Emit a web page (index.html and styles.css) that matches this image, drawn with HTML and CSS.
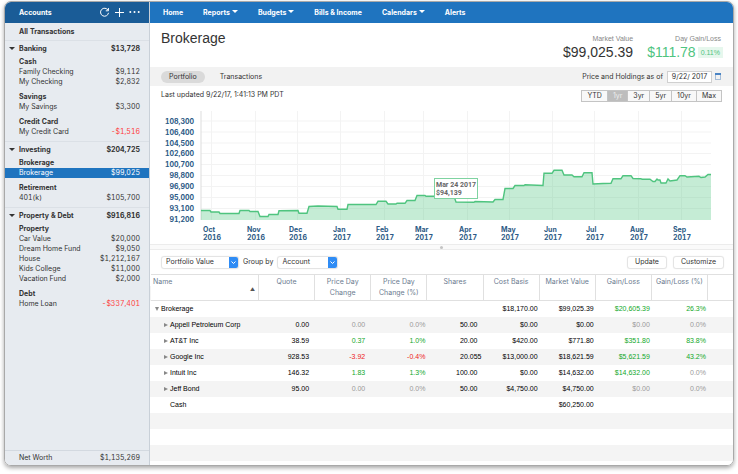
FILE: index.html
```html
<!DOCTYPE html>
<html lang="en">
<head>
    <meta charset="UTF-8">
    <meta name="viewport" content="width=device-width, initial-scale=1.0">
    <title>Brokerage</title>
    <link rel="stylesheet" href="styles.css">
</head>
<body>
    <div class="window">
        <aside class="sidebar">
            <div class="sidebar-top">
                <h2>Accounts</h2>
                <button class="icon-button" aria-label="Refresh"><svg width="11" height="11" viewBox="0 0 11 11"><path d="M9 3.2A4 4 0 1 0 9.5 5.8M9.4 1v2.8H6.8" /></svg></button>
                <button class="icon-button" aria-label="Add"><svg width="11" height="11" viewBox="0 0 11 11"><path d="M5.5 1v9M1 5.5h9" /></svg></button>
                <button class="icon-button" aria-label="More"><svg class="dots" width="11" height="11" viewBox="0 0 11 11"><circle cx="1.3" cy="5" r="1" /><circle cx="5.5" cy="5" r="1" /><circle cx="9.7" cy="5" r="1" /></svg></button>
            </div>
            <a href="#" class="all">All Transactions</a>
            <section>
                <h3><span>Banking</span><span>$13,728</span></h3>
                <div class="group">
                    <h4>Cash</h4>
                    <a href="#" class="account"><span>Family Checking</span><span>$9,112</span></a>
                    <a href="#" class="account"><span>My Checking</span><span>$2,832</span></a>
                </div>
                <div class="group">
                    <h4>Savings</h4>
                    <a href="#" class="account"><span>My Savings</span><span>$3,300</span></a>
                </div>
                <div class="group">
                    <h4>Credit Card</h4>
                    <a href="#" class="account"><span>My Credit Card</span><span class="debt">-$1,516</span></a>
                </div>
            </section>
            <section>
                <h3><span>Investing</span><span>$204,725</span></h3>
                <div class="group">
                    <h4>Brokerage</h4>
                    <a href="#" class="account selected"><span>Brokerage</span><span>$99,025</span></a>
                </div>
                <div class="group">
                    <h4>Retirement</h4>
                    <a href="#" class="account"><span>401(k)</span><span>$105,700</span></a>
                </div>
            </section>
            <section>
                <h3><span>Property &amp; Debt</span><span>$916,816</span></h3>
                <div class="group">
                    <h4>Property</h4>
                    <a href="#" class="account"><span>Car Value</span><span>$20,000</span></a>
                    <a href="#" class="account"><span>Dream Home Fund</span><span>$9,050</span></a>
                    <a href="#" class="account"><span>House</span><span>$1,212,167</span></a>
                    <a href="#" class="account"><span>Kids College</span><span>$11,000</span></a>
                    <a href="#" class="account"><span>Vacation Fund</span><span>$2,000</span></a>
                </div>
                <div class="group">
                    <h4>Debt</h4>
                    <a href="#" class="account"><span>Home Loan</span><span class="debt">-$337,401</span></a>
                </div>
            </section>
            <div class="net-worth"><span>Net Worth</span><span>$1,135,269</span></div>
        </aside>

        <main>
            <nav>
                <a href="#">Home</a>
                <a href="#" class="menu">Reports</a>
                <a href="#" class="menu">Budgets</a>
                <a href="#">Bills &amp; Income</a>
                <a href="#" class="menu">Calendars</a>
                <a href="#">Alerts</a>
            </nav>
            <header>
                <h1>Brokerage</h1>
                <div class="stat">
                    <div class="label">Market Value</div>
                    <div class="value">$99,025.39</div>
                </div>
                <div class="stat gain">
                    <div class="label">Day Gain/Loss</div>
                    <div class="value">$111.78<span class="badge">0.11%</span></div>
                </div>
            </header>
            <div class="tabs">
                <button class="tab active">Portfolio</button>
                <button class="tab">Transactions</button>
                <label for="asOf">Price and Holdings as of</label>
                <input type="text" id="asOf" value="9/22/ 2017">
                <button class="icon-button" aria-label="Calendar"><svg class="calendar" width="6" height="7" viewBox="0 0 6 7"><rect x="0.5" y="0.5" width="5" height="6" /><path d="M0 1h6" /></svg></button>
            </div>
            <div class="chart-bar">
                <p>Last updated 9/22/17, 1:41:13 PM PDT</p>
                <div class="ranges">
                    <button>YTD</button>
                    <button class="active">1yr</button>
                    <button>3yr</button>
                    <button>5yr</button>
                    <button>10yr</button>
                    <button>Max</button>
                </div>
            </div>
            <svg class="chart" viewBox="150 104 583 140">
                <path class="grid" d="M201 121h510M201 132h510M201 143h510M201 153.500h510M201 164.500h510M201 175.500h510M201 186.500h510M201 197.500h510M201 208.500h510" />
                <path class="grid" d="M211.500 111v109M255.500 111v109M297.500 111v109M340.500 111v109M384.500 111v109M423.500 111v109M467.500 111v109M509.500 111v109M552.500 111v109M594.500 111v109M638.500 111v109M681.500 111v109" />
                <path class="axis" d="M201 111v109" />
                <path class="area" d="M201 210.500H210L211 212H219L220 213.500H239L240 210.500H249L250 211.500H258L260 216.500H268L269 214.500H278L279 210.800L298 210.500L299 213.300H307L309 206.500L318 206L337 206.500L338 209.300H347L348 204.500H376L378 201.300H386L388 204H396L397 203.300H405L407 200.500H415L417 195.500H425L426 196.300H454L456 202L474 202.300L475 201.500L493 202L495 199.500H503L505 188.500H513L515 185.500H524L525 184.800L543 185.500L544 173.300H552L554 170.300H562L564 175H572L574 176.700H582L584 172.700H592L593 184L603 183.500L611 183.300L613 178.700H621L623 175.700H631L633 178.500L641 178.700L642 179.300H650L653 181.500H655L657 179L658 180H660L661 183H666L668 179L670 181L677 180L680 175.700H685L687 177L699 176.300L701 177.500L705 177L708 174.500H711V220H201Z" />
                <path class="line" d="M201 210.500H210L211 212H219L220 213.500H239L240 210.500H249L250 211.500H258L260 216.500H268L269 214.500H278L279 210.800L298 210.500L299 213.300H307L309 206.500L318 206L337 206.500L338 209.300H347L348 204.500H376L378 201.300H386L388 204H396L397 203.300H405L407 200.500H415L417 195.500H425L426 196.300H454L456 202L474 202.300L475 201.500L493 202L495 199.500H503L505 188.500H513L515 185.500H524L525 184.800L543 185.500L544 173.300H552L554 170.300H562L564 175H572L574 176.700H582L584 172.700H592L593 184L603 183.500L611 183.300L613 178.700H621L623 175.700H631L633 178.500L641 178.700L642 179.300H650L653 181.500H655L657 179L658 180H660L661 183H666L668 179L670 181L677 180L680 175.700H685L687 177L699 176.300L701 177.500L705 177L708 174.500H711" />
                <g class="y-labels">
                    <text x="194" y="124">108,300</text>
                    <text x="194" y="135">106,400</text>
                    <text x="194" y="146">104,500</text>
                    <text x="194" y="156">102,600</text>
                    <text x="194" y="167">100,700</text>
                    <text x="194" y="178">98,800</text>
                    <text x="194" y="189">96,900</text>
                    <text x="194" y="200">95,000</text>
                    <text x="194" y="211">93,100</text>
                    <text x="194" y="222">91,200</text>
                </g>
                <g class="x-labels">
                    <text x="203" y="232">Oct<tspan x="203" dy="8">2016</tspan></text>
                    <text x="247" y="232">Nov<tspan x="247" dy="8">2016</tspan></text>
                    <text x="289" y="232">Dec<tspan x="289" dy="8">2016</tspan></text>
                    <text x="333" y="232">Jan<tspan x="333" dy="8">2017</tspan></text>
                    <text x="376" y="232">Feb<tspan x="376" dy="8">2017</tspan></text>
                    <text x="415" y="232">Mar<tspan x="415" dy="8">2017</tspan></text>
                    <text x="459" y="232">Apr<tspan x="459" dy="8">2017</tspan></text>
                    <text x="501" y="232">May<tspan x="501" dy="8">2017</tspan></text>
                    <text x="544" y="232">Jun<tspan x="544" dy="8">2017</tspan></text>
                    <text x="586" y="232">Jul<tspan x="586" dy="8">2017</tspan></text>
                    <text x="630" y="232">Aug<tspan x="630" dy="8">2017</tspan></text>
                    <text x="673" y="232">Sep<tspan x="673" dy="8">2017</tspan></text>
                </g>
                <g class="tip">
                    <rect x="434.500" y="178.500" width="43" height="20" />
                    <text x="436" y="187">Mar 24 2017<tspan x="436" dy="8">$94,139</tspan></text>
                </g>
            </svg>
            <div class="splitter"></div>
            <div class="toolbar">
                <span class="select value-select">
                    <select aria-label="View"><option>Portfolio Value</option></select>
                    <svg width="9" height="11" viewBox="0 0 9 11"><path d="M2.500 4.500l2 2 2-2" /></svg>
                </span>
                <label for="groupBy">Group by</label>
                <span class="select group-select">
                    <select id="groupBy"><option>Account</option></select>
                    <svg width="9" height="11" viewBox="0 0 9 11"><path d="M2.500 4.500l2 2 2-2" /></svg>
                </span>
                <button class="first">Update</button>
                <button>Customize</button>
            </div>
            <div class="holdings">
                <table>
                    <thead>
                        <tr>
                            <th class="name">Name<span class="sort">▲</span></th>
                            <th>Quote</th>
                            <th>Price Day<br>Change</th>
                            <th>Price Day<br>Change (%)</th>
                            <th>Shares</th>
                            <th>Cost Basis</th>
                            <th>Market Value</th>
                            <th>Gain/Loss</th>
                            <th>Gain/Loss (%)</th>
                            <th class="rest"></th>
                        </tr>
                    </thead>
                    <tbody>
                        <tr>
                            <td class="open">Brokerage</td>
                            <td></td>
                            <td></td>
                            <td></td>
                            <td></td>
                            <td>$18,170.00</td>
                            <td>$99,025.39</td>
                            <td class="up">$20,605.39</td>
                            <td class="up">26.3%</td>
                            <td></td>
                        </tr>
                        <tr>
                            <td class="closed">Appell Petroleum Corp</td>
                            <td class="wide">0.00</td>
                            <td class="wide zero">0.00</td>
                            <td class="zero">0.0%</td>
                            <td class="wide">50.00</td>
                            <td>$0.00</td>
                            <td>$0.00</td>
                            <td class="zero">$0.00</td>
                            <td class="zero">0.0%</td>
                            <td></td>
                        </tr>
                        <tr>
                            <td class="closed">AT&amp;T Inc</td>
                            <td class="wide">38.59</td>
                            <td class="wide up">0.37</td>
                            <td class="up">1.0%</td>
                            <td class="wide">20.00</td>
                            <td>$420.00</td>
                            <td>$771.80</td>
                            <td class="up">$351.80</td>
                            <td class="up">83.8%</td>
                            <td></td>
                        </tr>
                        <tr>
                            <td class="closed">Google Inc</td>
                            <td class="wide">928.53</td>
                            <td class="wide down">-3.92</td>
                            <td class="down">-0.4%</td>
                            <td>20.055</td>
                            <td>$13,000.00</td>
                            <td>$18,621.59</td>
                            <td class="up">$5,621.59</td>
                            <td class="up">43.2%</td>
                            <td></td>
                        </tr>
                        <tr>
                            <td class="closed">Intuit Inc</td>
                            <td class="wide">146.32</td>
                            <td class="wide up">1.83</td>
                            <td class="up">1.3%</td>
                            <td class="wide">100.00</td>
                            <td>$0.00</td>
                            <td>$14,632.00</td>
                            <td class="up">$14,632.00</td>
                            <td class="zero">0.0%</td>
                            <td></td>
                        </tr>
                        <tr>
                            <td class="closed">Jeff Bond</td>
                            <td class="wide">95.00</td>
                            <td class="wide zero">0.00</td>
                            <td class="zero">0.0%</td>
                            <td class="wide">50.00</td>
                            <td>$4,750.00</td>
                            <td>$4,750.00</td>
                            <td class="zero">$0.00</td>
                            <td class="zero">0.0%</td>
                            <td></td>
                        </tr>
                        <tr>
                            <td class="leaf">Cash</td>
                            <td></td>
                            <td></td>
                            <td></td>
                            <td></td>
                            <td></td>
                            <td>$60,250.00</td>
                            <td></td>
                            <td></td>
                            <td></td>
                        </tr>
                    </tbody>
                </table>
            </div>
        </main>
    </div>
</body>
</html>
```
FILE: styles.css
```css
* {
    box-sizing: border-box;
}
body {
    margin: 0;
    padding: 1px 4px 8px;
    height: 100vh;
    background: white;
    font-family: Inter, "Liberation Sans", sans-serif;
    font-size: 7px;
    line-height: 10px;
    color: #333;
}
h1, h2, h3, h4, p {
    margin: 0;
    font-size: inherit;
    font-weight: bold;
}
a {
    color: inherit;
    text-decoration: none;
}
button, input, select {
    margin: 0;
    padding: 0;
    border: none;
    background: none;
    font: inherit;
    color: inherit;
}
.window {
    display: flex;
    height: 100%;
    border: 1px solid #a9a9a9;
    border-radius: 7px;
    overflow: hidden;
    box-shadow: 0 2px 4px rgba(0,0,0,0.35);
}

/* sidebar */
.sidebar {
    display: flex;
    flex-direction: column;
    flex: 0 0 145px;
    background: #e7ebf0;
    border-right: 1px solid #c9d0d8;
    font-variant-numeric: tabular-nums;
}
.sidebar-top {
    display: flex;
    align-items: center;
    gap: 4px;
    height: 21px;
    padding: 0 9px 0 14px;
    background: #1a5c97;
    color: white;
}
.sidebar-top h2 {
    flex-grow: 1;
}
.icon-button {
    display: flex;
    cursor: pointer;
}
.icon-button svg {
    fill: none;
    stroke: currentColor;
}
.icon-button .dots {
    fill: currentColor;
    stroke: none;
}
.icon-button .calendar {
    stroke: #a5bdd8;
}
.icon-button .calendar path {
    stroke: #4a84c4;
    stroke-width: 2;
}
.all {
    padding: 4px 14px 3px;
    font-weight: bold;
}
.sidebar section {
    border-top: 1px solid #dbe0e6;
    padding-bottom: 4px;
}
.sidebar h3, .account, .net-worth {
    display: flex;
    justify-content: space-between;
    padding: 0 9px 0 14px;
}
.sidebar h3 {
    align-items: center;
    height: 15px;
    padding-left: 4px;
}
.sidebar h3::before {
    content: "";
    border: 3px solid transparent;
    border-top: 3px solid #333;
    border-bottom: none;
    margin-right: 4px;
}
.sidebar h3 span:first-of-type {
    flex-grow: 1;
}
.sidebar h4 {
    padding-left: 14px;
    line-height: 11px;
}
.group + .group {
    margin-top: 4px;
}
.account.selected {
    background: #1f74bf;
    color: white;
}
.debt {
    color: #ff3b3b;
}
.net-worth {
    margin-top: auto;
    padding-top: 2px;
    padding-bottom: 2px;
    border-top: 1px solid #d3d9e0;
}

/* main column */
main {
    display: flex;
    flex-direction: column;
    flex: 1;
    min-width: 0;
}
nav {
    display: flex;
    align-items: center;
    gap: 20px;
    height: 21px;
    padding: 0 13px;
    background: #1f74bf;
    color: white;
    font-weight: bold;
}
nav .menu::after {
    content: "";
    display: inline-block;
    border: 3px solid transparent;
    border-top: 3px solid white;
    border-bottom: none;
    margin-left: 2px;
    vertical-align: 2px;
}
header {
    display: flex;
    gap: 14px;
    height: 44px;
    padding: 7px 10px 0 11px;
    font-family: "Liberation Sans", Arial, sans-serif;
}
header h1 {
    flex-grow: 1;
    font-size: 14px;
    font-weight: normal;
    line-height: 17px;
}
.stat {
    padding-top: 4px;
    text-align: right;
}
.stat .label {
    color: #888;
}
.stat .value {
    display: flex;
    align-items: center;
    font-size: 14px;
    line-height: 16px;
}
.gain .label {
    padding-right: 2px;
}
.gain .value {
    color: #4fc47f;
}
.badge {
    margin-left: 2px;
    padding: 0 3px;
    background: #e6f7ed;
    font-size: 7px;
    line-height: 11px;
}
.tabs {
    display: flex;
    align-items: center;
    height: 19px;
    padding: 0 12px 0 11px;
    background: #f2f2f2;
}
.tab {
    padding: 1px 8px;
    margin-right: 7px;
    border-radius: 6px;
    cursor: pointer;
}
.tab.active {
    background: #dadada;
}
.tabs label {
    margin-left: auto;
}
.tabs input {
    width: 45px;
    height: 12px;
    margin: 0 3px 0 4px;
    border: 1px solid #d0d0d0;
    background: white;
    text-align: center;
}
.chart-bar {
    display: flex;
    justify-content: space-between;
    height: 18px;
    padding: 4px 11px 0;
}
.chart-bar p {
    font-weight: normal;
}
.ranges {
    display: flex;
    height: 12px;
    border: 1px solid #c4c4c4;
}
.ranges button {
    padding: 0 5px;
    background: #f8f8f8;
    cursor: pointer;
}
.ranges button + button {
    border-left: 1px solid #c4c4c4;
}
.ranges .active {
    background: #bdbdbd;
    color: #eee;
}

/* chart */
.chart {
    display: block;
    width: 100%;
    font-variant-numeric: tabular-nums;
}
.chart .grid {
    stroke: #f3f3f3;
}
.chart .axis {
    stroke: #ddd;
}
.chart .area {
    fill: #4fc47f;
    fill-opacity: 0.33;
}
.chart .line {
    fill: none;
    stroke: #4fc47f;
    stroke-width: 1.4;
}
.chart text {
    font-size: 7px;
    font-weight: bold;
    fill: #2c5a85;
}
.y-labels {
    text-anchor: end;
}
.chart .tip rect {
    fill: white;
    stroke: #7fd3a1;
}
.chart .tip text {
    font-family: Roboto, sans-serif;
    fill: #666;
}
.splitter {
    display: flex;
    align-items: center;
    justify-content: center;
    height: 6px;
    border: 1px solid #ececec;
    border-width: 1px 0;
    background: #fafafa;
}
.splitter::before {
    content: "";
    width: 3px;
    height: 3px;
    border-radius: 50%;
    background: #c4c4c4;
}
.toolbar {
    display: flex;
    align-items: center;
    gap: 5px;
    height: 24px;
    padding: 0 10px 0 12px;
}
.toolbar button {
    height: 11px;
    padding: 0 7px;
    border-radius: 2px;
    background: white;
    box-shadow: 0 0 1px 1px #e2e2e2;
    cursor: pointer;
}
.toolbar .first {
    margin: 0 3px 0 auto;
}
.select {
    display: grid;
    border-radius: 2px;
    background: white;
    box-shadow: 0 0 1px 1px #e2e2e2;
}
.value-select {
    width: 76px;
}
.group-select {
    width: 59px;
}
.select select, .select svg {
    grid-area: 1 / 1;
}
.select select {
    appearance: none;
    width: 100%;
    height: 11px;
    padding: 0 12px 0 4px;
}
.select svg {
    justify-self: end;
    border-radius: 0 2px 2px 0;
    background: #2f8cf5;
    fill: none;
    stroke: white;
    pointer-events: none;
}

/* the stripes go on below the last row */
.holdings {
    flex: 1;
    padding-left: 1px;
    background: repeating-linear-gradient(#fff 0, #fff 16px, #f4f4f4 16px, #f4f4f4 32px) 0 27px;
    font-family: "Liberation Sans", Arial, sans-serif;
    color: #000;
}
table {
    width: 100%;
    border-collapse: separate;
    border-spacing: 0;
    table-layout: fixed;
}
th {
    height: 27px;
    padding: 1px 2px 0;
    border: 1px solid #e0e0e0;
    border-left: none;
    background: white;
    color: #6b7b8f;
    font-family: Inter, sans-serif;
    font-weight: normal;
    line-height: 11px;
    vertical-align: top;
    white-space: nowrap;
}
th.name {
    width: 108px;
    text-align: left;
}
th.rest {
    width: 25px;
    border-right: none;
}
.sort {
    display: block;
    padding-right: 1px;
    color: #555;
    font-size: 5px;
    line-height: 4px;
    text-align: right;
}
td {
    height: 16px;
    padding: 0 2px;
    text-align: right;
    white-space: nowrap;
}
td.wide {
    padding-right: 6px;
}
td:first-child {
    padding-left: 19px;
    text-align: left;
}
td.open:first-child {
    padding-left: 4px;
}
td.closed:first-child {
    padding-left: 13px;
}
.open::before, .closed::before {
    content: "";
    display: inline-block;
    margin-right: 2px;
    border: 2px solid transparent;
}
.open::before {
    border-top: 4px solid #888;
    border-bottom: none;
}
.closed::before {
    border-left: 4px solid #888;
    border-right: none;
}
.up {
    color: #12a82a;
}
.down {
    color: #ee2222;
}
.zero {
    color: #999;
}
```
